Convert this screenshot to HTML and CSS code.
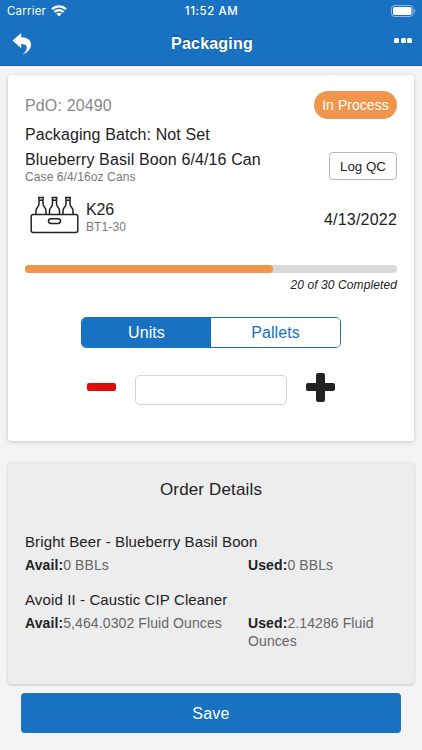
FILE: index.html
```html
<!DOCTYPE html>
<html lang="en">
<head>
<meta charset="utf-8">
<title>Packaging</title>
<meta name="viewport" content="width=device-width, initial-scale=1">
<link rel="stylesheet" href="styles.css">
</head>
<body>
<header class="header">
  <div class="status">
    <div class="carrier">
      <span>Carrier</span>
      <svg class="wifi" viewBox="0 0 16 12" fill="none" stroke="#fff" stroke-width="2.2"><path d="M1 4.300C5 .3 11 .3 15 4.300M3.400 7C6 4.500 10 4.500 12.600 7"/><path d="M5.300 8.800Q8 6.800 10.700 8.800L8 11.600z" fill="#fff" stroke="none"/></svg>
    </div>
    <span class="time">11:52 AM</span>
    <svg class="battery" viewBox="0 0 25 12"><rect x=".5" y=".5" width="21.500" height="11" rx="3" fill="none" stroke="#fff" stroke-opacity=".5"/><rect x="2" y="2" width="18.500" height="8" rx="1.600" fill="#fff"/><path d="M23.200 4v4q1.200-.6 1.200-2t-1.200-2z" fill="#fff" fill-opacity=".5"/></svg>
  </div>
  <div class="nav">
    <svg class="back" viewBox="0 0 20 22"><path d="M.5 7.600L9.200 0v4.200C15.500 4.400 19 7 19 11.500c0 4.500-3.500 8.200-8.500 10.200 3-2.700 4.300-4.900 4.300-7 0-2.500-2-3.700-5.600-3.700v4.200z" fill="#fff"/></svg>
    <h1 class="title">Packaging</h1>
    <div class="more"><i></i><i></i><i></i></div>
  </div>
</header>
<main>
  <section class="card">
    <div class="row top"><span class="order">PdO: 20490</span><span class="badge">In Process</span></div>
    <div class="batch">Packaging Batch: Not Set</div>
    <div class="row product">
      <div>
        <div class="name">Blueberry Basil Boon 6/4/16 Can</div>
        <div class="sub">Case 6/4/16oz Cans</div>
      </div>
      <button class="qc">Log QC</button>
    </div>
    <div class="row tank">
      <svg class="crate" viewBox="0 0 50 38" fill="none" stroke="#222" stroke-width="1.500"><rect x="1.200" y="18.400" width="46.600" height="18" rx="2"/><rect x="18.500" y="22.700" width="12" height="4.800" rx="2.400"/><path d="M6 18v-3.500c0-3 3-3.500 3-6.500V1.500h4V8c0 3 3 3.500 3 6.500V18M8 1.500h6M9 4.200h4"/><path d="M19.500 18v-3.500c0-3 3-3.500 3-6.500V1.500h4V8c0 3 3 3.500 3 6.500V18M21.500 1.500h6M22.500 4.200h4"/><path d="M33 18v-3.500c0-3 3-3.500 3-6.500V1.500h4V8c0 3 3 3.500 3 6.500V18M35 1.500h6M36 4.200h4"/></svg>
      <div class="lot"><div class="k">K26</div><div class="bt">BT1-30</div></div>
      <span class="date">4/13/2022</span>
    </div>
    <div class="track"><div class="fill"></div></div>
    <div class="done">20 of 30 Completed</div>
    <div class="segments"><button class="seg active">Units</button><button class="seg">Pallets</button></div>
    <div class="stepper"><button class="minus" aria-label="Decrease"></button><input class="amount" aria-label="Quantity"><button class="plus" aria-label="Increase"></button></div>
  </section>
  <section class="details">
    <h2>Order Details</h2>
    <div class="item">
      <h3>Bright Beer - Blueberry Basil Boon</h3>
      <div class="values"><p><b>Avail:</b>0 BBLs</p><p><b>Used:</b>0 BBLs</p></div>
    </div>
    <div class="item">
      <h3>Avoid II - Caustic CIP Cleaner</h3>
      <div class="values"><p><b>Avail:</b>5,464.0302 Fluid Ounces</p><p><b>Used:</b>2.14286 Fluid Ounces</p></div>
    </div>
  </section>
  <button class="save">Save</button>
</main>
</body>
</html>
```
FILE: styles.css
```css
* { box-sizing: border-box; }
body { margin: 0; height: 750px; overflow: hidden; background: #f4f4f4; color: #222; font-family: "Liberation Sans", Arial, sans-serif; font-size: 16px; letter-spacing: .1px; }
button { font: inherit; letter-spacing: inherit; margin: 0; padding: 0; }
h1, h2, h3, p { margin: 0; font-weight: 400; }
.row { display: flex; justify-content: space-between; }
.header { height: 66px; background: #1871c1; color: #fff; border-bottom: 1px solid #285a8b; }
.status { height: 22px; display: grid; grid-template-columns: 1fr auto 1fr; align-items: center; padding: 0 6px 0 7px; font-family: Inter, sans-serif; font-size: 11.5px; }
.carrier { display: flex; gap: 5px; align-items: center; letter-spacing: .2px; }
.wifi { width: 16px; height: 12px; }
.time { font-weight: 500; letter-spacing: .55px; }
.battery { width: 25px; height: 12px; justify-self: end; }
.nav { height: 44px; display: grid; grid-template-columns: 1fr auto 1fr; align-items: center; padding: 0 10px 0 12px; }
.back { width: 20px; height: 22px; }
.title { font-size: 16px; font-weight: 700; letter-spacing: .2px; line-height: 22px; text-shadow: 0 -1px 1px #1b5288; }
.more { display: flex; gap: 1.5px; margin-top: -8px; justify-self: end; }
.more i { width: 5px; height: 5px; border-radius: 1.5px; background: #fff; }
.card { margin: 9px 8px 0; height: 366px; border-radius: 4px; background: #fff; box-shadow: 0 1px 4px #0003; padding: 16px 17px; }
.top { height: 28px; }
.order { color: #888; line-height: 30px; letter-spacing: .15px; }
.badge { width: 83px; height: 28px; border-radius: 14px; background: #f0964c; color: #fff; font-size: 14px; line-height: 29px; text-align: center; letter-spacing: .05px; }
.batch { margin-top: 6px; line-height: 20px; height: 20px; }
.product { height: 40px; margin-top: 4px; }
.name { line-height: 22px; letter-spacing: .12px; }
.sub { color: #777; font-size: 12px; line-height: 14px; margin-top: -1px; }
.qc { width: 68px; height: 28px; margin-top: 3px; border: 1px solid #b5b5b5; border-radius: 4px; background: #fff; color: #222; font-size: 13.3px; letter-spacing: 0; }
.tank { height: 40px; margin-top: 6px; padding-left: 5px; }
.crate { width: 50px; height: 38px; margin-top: 1px; }
.lot { flex: 1; padding: 5px 0 0 6px; }
.k { line-height: 19px; letter-spacing: -.1px; }
.bt { color: #777; font-size: 12px; line-height: 16px; }
.date { line-height: 20px; padding-top: 15px; letter-spacing: .2px; }
.track { height: 8px; border-radius: 4px; background: #d9d9d9; margin-top: 30px; }
.fill { width: 66.7%; height: 8px; border-radius: 4px; background: #f0964c; }
.done { text-align: right; font-style: italic; font-size: 12px; line-height: 16px; margin-top: 4px; }
.segments { display: flex; width: 260px; height: 31px; margin: 24px auto 0; border: 1px solid #1871c1; border-radius: 5px; overflow: hidden; }
.seg { flex: 1; border: 0; background: #fff; color: #1871c1; padding-top: 1px; }
.seg.active { background: #1871c1; color: #fff; }
.stepper { display: flex; align-items: center; justify-content: center; gap: 19px; height: 30px; margin-top: 27px; }
.minus { width: 29px; height: 8px; border: 0; border-radius: 2px; background: #df0c0c; margin-top: -6px; }
.amount { width: 152px; height: 30px; border: 1px solid #d2d2d2; border-radius: 5px; background: #fff; padding: 0 8px; font: inherit; }
.plus { width: 29px; height: 29px; border: 0; background: #222; margin-top: -5px; clip-path: path("M12 0H17Q19 0 19 2V10H27Q29 10 29 12V16Q29 18 27 18H19V27Q19 29 17 29H12Q10 29 10 27V18H2Q0 18 0 16V12Q0 10 2 10H10V2Q10 0 12 0Z"); }
.details { margin: 21px 8px 0; height: 222px; border-radius: 4px; background: #ededed; box-shadow: 0 1px 3px #0003; padding: 17px 17px 0; }
.details h2 { font-size: 17px; line-height: 22px; text-align: center; margin-bottom: 30px; letter-spacing: .15px; }
.details h3 { font-size: 15px; line-height: 22px; letter-spacing: .12px; }
.item { margin-bottom: 15px; }
.values { display: grid; grid-template-columns: 223px 1fr; color: #666; font-size: 14px; line-height: 18px; margin-top: 3px; }
.values b { color: #222; }
.save { display: block; width: 380px; height: 40px; margin: 9px auto 0; border: 0; border-radius: 4px; background: #1871c1; color: #fff; padding-top: 1px; letter-spacing: .25px; }
```
